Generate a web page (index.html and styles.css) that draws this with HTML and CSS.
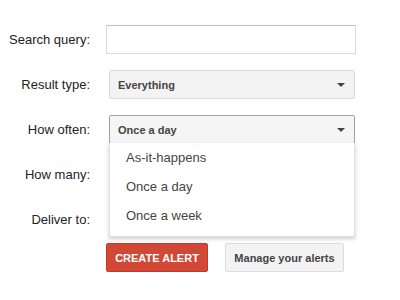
FILE: index.html
```html
<!DOCTYPE html>
<html>
<head>
<meta charset="utf-8">
<link rel="stylesheet" href="styles.css">
</head>
<body>
<div class="form">
  <div class="row">
    <label class="label">Search query:</label>
    <div class="input"></div>
  </div>
  <div class="row">
    <label class="label">Result type:</label>
    <div class="select"><span>Everything</span><span class="arrow"></span></div>
  </div>
  <div class="row">
    <label class="label">How often:</label>
    <div class="field">
      <div class="select active"><span>Once a day</span><span class="arrow"></span></div>
      <ul class="menu">
        <li>As-it-happens</li>
        <li>Once a day</li>
        <li>Once a week</li>
      </ul>
    </div>
  </div>
  <div class="row">
    <label class="label">How many:</label>
    <div class="select"><span></span><span class="arrow"></span></div>
  </div>
  <div class="row">
    <label class="label">Deliver to:</label>
    <div class="select"><span></span><span class="arrow"></span></div>
  </div>
  <div class="row buttons">
    <span class="label"></span>
    <div class="btns">
      <button class="btn primary">CREATE ALERT</button>
      <button class="btn secondary">Manage your alerts</button>
    </div>
  </div>
</div>
</body>
</html>
```

FILE: styles.css
```css
html, body {
  margin: 0;
  padding: 0;
  background: #fff;
  font-family: Arial, "Liberation Sans", sans-serif;
}
.form {
  padding-top: 25px;
  display: flex;
  flex-direction: column;
  gap: 16px;
}
.row {
  display: grid;
  grid-template-columns: 90px 1fr;
  column-gap: 16px;
  align-items: center;
  height: 29px;
}
.label {
  text-align: right;
  font-size: 13px;
  color: #222;
}
.input {
  width: 248px;
  height: 27px;
  border: 1px solid #d9d9d9;
  border-top-color: #c0c0c0;
  background: #fff;
}
.field {
  position: relative;
  height: 29px;
}
.select {
  margin-left: 3px;
  height: 27px;
  border: 1px solid #dcdcdc;
  border-radius: 2px;
  background: #f3f3f3;
  display: flex;
  align-items: center;
  justify-content: space-between;
  padding: 0 0 0 8px;
  box-sizing: content-box;
  width: 236px;
  font-size: 11px;
  font-weight: bold;
  color: #444;
}
.select.active {
  border-color: #a0a0a0;
  background: #f5f5f5;
}
.arrow {
  width: 0;
  height: 0;
  border-left: 4px solid transparent;
  border-right: 4px solid transparent;
  border-top: 4px solid #444;
  margin-right: 9px;
}
.menu {
  position: absolute;
  left: 3px;
  top: 28px;
  width: 246px;
  margin: 0;
  padding: 0 0 6px 0;
  list-style: none;
  background: #fff;
  border: 1px solid #e0e0e0;
  border-top: none;
  box-sizing: border-box;
  box-shadow: 0 2px 4px rgba(0,0,0,0.2);
  z-index: 2;
}
.menu li {
  height: 29px;
  line-height: 29px;
  padding-left: 16px;
  font-size: 13px;
  color: #444;
}
.buttons {
  margin-top: -7px;
}
.btns {
  display: flex;
  gap: 17px;
}
.btn {
  height: 29px;
  border-radius: 2px;
  font-family: Arial, "Liberation Sans", sans-serif;
  font-size: 11px;
  font-weight: bold;
  padding: 0 8px;
  cursor: pointer;
}
.primary {
  width: 102px;
  background: #d14836;
  border: 1px solid #c53727;
  color: #fff;
}
.secondary {
  width: 119px;
  background: #f3f3f3;
  border: 1px solid #dcdcdc;
  color: #444;
}
```
